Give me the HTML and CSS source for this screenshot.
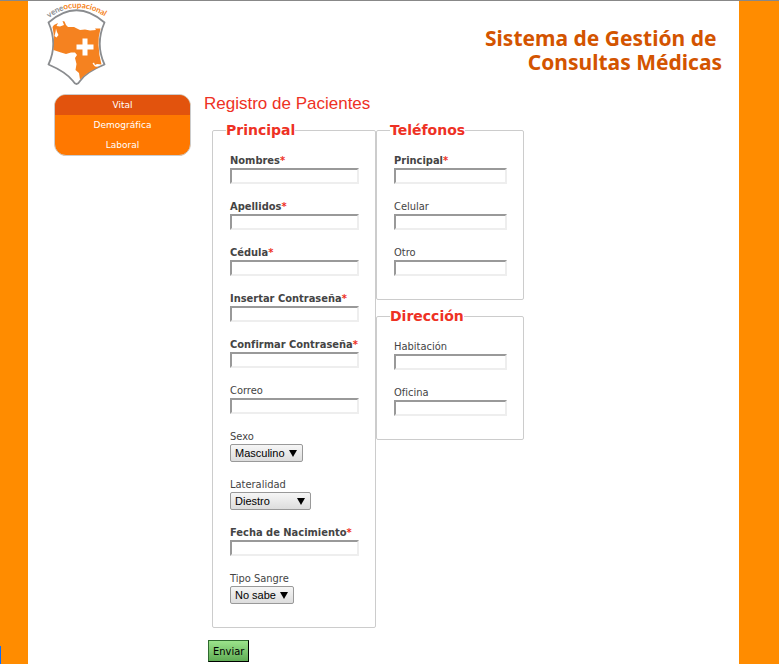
FILE: index.html
```html
<!DOCTYPE html>
<html lang="es">
<head>
<meta charset="utf-8">
<title>Registro de Pacientes</title>
<link rel="stylesheet" href="styles.css">
</head>
<body>
<div class="page">
  <header class="header">
    <svg class="logo" width="64" height="88" viewBox="0 0 64 88" role="img" aria-label="veneocupacional">
      <path id="arc" d="M5 17 Q33 -4 65 18" fill="none"/>
      <text class="logo-text"><textPath href="#arc"><tspan fill="#8a8c8f">vene</tspan><tspan fill="#f58220">ocupacional</tspan></textPath></text>
      <path d="M4.500 21.500 Q32.500 -3 60.500 21.500 Q51 43 60.500 63.500 Q42 71 36 80 Q32.500 86 29 80 Q22 71 4.500 63.500 Q14 43 4.500 21.500Z" fill="#fff" stroke="#8a8c8f" stroke-width="1.800" stroke-linejoin="round"/>
      <path d="M8.500 26 L10 24 L14 22 L12.500 25 L16 25.500 L20 24 L18.500 20 L20.500 20.500 L22 24 L24 26 L30 26 L36 29 L41 28.500 L46 29.500 L52 29 L51 27.500 L56.500 27.500 Q52 43 57.500 63.500 L53 63 L51 64 L50 61.500 L48.500 62.500 L51 65.500 L55 66 Q43 71 36 78.500 L35 72 L31.500 69 L32.500 63 L31 57 L33 54 L31 51.500 L27 51.500 L22 53 L17 51.500 L9.500 49 Q11 38 8.500 26Z" fill="#f58220"/>
      <path d="M12 27.500 L13 31 L14.500 34 L12.500 36.500 L10.500 35 L11.500 31Z" fill="#fff"/>
      <path d="M38.500 37.500h5v6h6v5h-6v6h-5v-6h-6v-5h6z" fill="#fff"/>
    </svg>
    <div class="title">Sistema de Gestión de&nbsp;<br>Consultas Médicas</div>
  </header>
  <div class="body">
    <nav class="menu">
      <a class="menu-item active" href="#vital">Vital</a>
      <a class="menu-item" href="#demografica">Demográfica</a>
      <a class="menu-item" href="#laboral">Laboral</a>
    </nav>
    <main class="main">
      <h1 class="heading">Registro de Pacientes</h1>
      <form class="form">
        <div class="columns">
          <fieldset class="group">
            <legend>Principal</legend>
            <div class="field required"><label for="nombres">Nombres<em>*</em></label><input id="nombres" type="text"></div>
            <div class="field required"><label for="apellidos">Apellidos<em>*</em></label><input id="apellidos" type="text"></div>
            <div class="field required"><label for="cedula">Cédula<em>*</em></label><input id="cedula" type="text"></div>
            <div class="field required"><label for="clave">Insertar Contraseña<em>*</em></label><input id="clave" type="password"></div>
            <div class="field required"><label for="clave2">Confirmar Contraseña<em>*</em></label><input id="clave2" type="password"></div>
            <div class="field"><label for="correo">Correo</label><input id="correo" type="text"></div>
            <div class="field"><label for="sexo">Sexo</label><span class="picker"><select id="sexo"><option>Masculino</option></select></span></div>
            <div class="field"><label for="lateralidad">Lateralidad</label><span class="picker wide"><select id="lateralidad"><option>Diestro</option></select></span></div>
            <div class="field required"><label for="fecha">Fecha de Nacimiento<em>*</em></label><input id="fecha" type="text"></div>
            <div class="field"><label for="sangre">Tipo Sangre</label><span class="picker"><select id="sangre"><option>No sabe</option></select></span></div>
          </fieldset>
          <div class="side">
            <fieldset class="group">
              <legend>Teléfonos</legend>
              <div class="field required"><label for="telefono">Principal<em>*</em></label><input id="telefono" type="text"></div>
              <div class="field"><label for="celular">Celular</label><input id="celular" type="text"></div>
              <div class="field"><label for="otro">Otro</label><input id="otro" type="text"></div>
            </fieldset>
            <fieldset class="group">
              <legend>Dirección</legend>
              <div class="field"><label for="habitacion">Habitación</label><input id="habitacion" type="text"></div>
              <div class="field"><label for="oficina">Oficina</label><input id="oficina" type="text"></div>
            </fieldset>
          </div>
        </div>
        <button class="submit" type="submit">Enviar</button>
      </form>
    </main>
  </div>
</div>
<div class="marker"></div>
</body>
</html>
```
FILE: styles.css
```css
* { box-sizing: border-box; }

body {
  margin: 0;
  padding: 0 40px 0 28px;
  background: #ff8c00;
  border-top: 1px solid #888;
  font: 11px/14px "DejaVu Sans Condensed", "DejaVu Sans", sans-serif;
  color: #444;
}

.page {
  min-height: calc(100vh - 1px);
  background: #fff;
}

.header {
  display: flex;
  justify-content: space-between;
  padding: 0 17px 0 16px;
  height: 93px;
}

.logo { display: block; }

.logo-text {
  font: bold 8px "Lato", sans-serif;
}

.title {
  padding-top: 25px;
  font: bold 21px/24px "Noto Sans", sans-serif;
  text-align: right;
  color: #d35400;
}

.body {
  display: flex;
  align-items: flex-start;
  gap: 13px;
  padding-left: 26px;
}

.menu {
  width: 137px;
  flex: none;
  overflow: hidden;
  border: 1px solid #ccc;
  border-radius: 12px;
  background: #ff7800;
}

.menu-item {
  display: block;
  font: 9px/20px "DejaVu Sans", sans-serif;
  text-align: center;
  text-decoration: none;
  color: #fff;
}

.menu-item.active { background: #e2530d; }

.heading {
  margin: 0 0 8px;
  font: 17px/20px "Liberation Sans", Arial, sans-serif;
  color: #ee3124;
}

.form { padding-left: 4px; }

.columns {
  display: flex;
  align-items: flex-start;
  padding-left: 4px;
}

.group {
  width: 164px;
  margin: 0;
  padding: 15px 16px 23px 17px;
  border: 1px solid #ccc;
  border-radius: 2px;
}

.side {
  display: flex;
  flex-direction: column;
  gap: 8px;
}

.side .group { width: 148px; }

legend {
  margin-left: -4px;
  padding: 0;
  font: bold 14px/17px "DejaVu Sans", sans-serif;
  color: #ee3124;
}

.field + .field { margin-top: 16px; }

.field label { display: block; }

.required label { font-weight: bold; }

em {
  font-style: normal;
  color: #ee3124;
}

input {
  display: block;
  width: 100%;
  height: 16px;
  margin: 0;
  padding: 0;
  border: 2px solid;
  border-color: #999 #eee #eee #999;
  background: #fff;
}

.picker {
  position: relative;
  display: table;
}

.picker::after {
  content: "";
  position: absolute;
  top: 6px;
  right: 6px;
  border: 4px solid transparent;
  border-top: 7px solid #000;
  border-bottom: 0;
  pointer-events: none;
}

select {
  display: block;
  height: 18px;
  margin: 0;
  padding: 0 17px 0 4px;
  appearance: none;
  border: 1px solid #999;
  border-radius: 2px;
  background: linear-gradient(#f6f6f6, #ddd);
  font: 11px "Liberation Sans", Arial, sans-serif;
  color: #000;
}

.wide select { width: 81px; }

.submit {
  display: block;
  height: 22px;
  margin: 12px 0 0;
  padding: 0 4px;
  border: 1px solid;
  border-color: #2f6a2f #000 #000 #2f6a2f;
  background: linear-gradient(#9be38b, #60ac55);
  font: 11px "DejaVu Sans Condensed", "DejaVu Sans", sans-serif;
  color: #000;
}

.marker {
  position: fixed;
  left: 0;
  bottom: 0;
  width: 1px;
  height: 18px;
  background: #0a6cff;
}
```
